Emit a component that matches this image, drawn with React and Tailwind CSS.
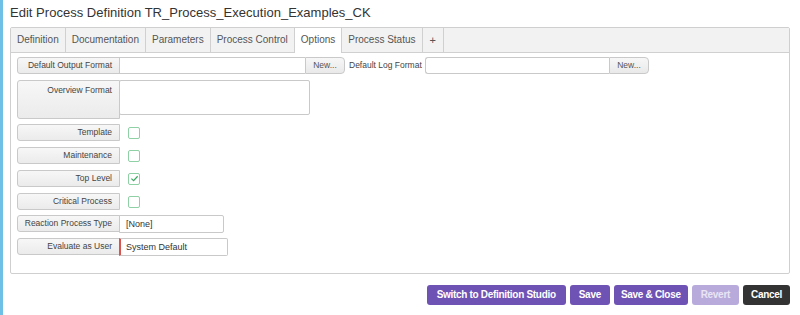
import React from 'react';

const tabs = ['Definition', 'Documentation', 'Parameters', 'Process Control', 'Options', 'Process Status', '+'];

function Label({ children, tall }) {
  return (
    <div
      className={`w-[103px] shrink-0 border border-[#c9c9c9] rounded-l-[3px] bg-gradient-to-b from-[#f7f7f7] to-[#ebebeb] text-right pr-[7px] text-[8.5px] text-[#444] whitespace-nowrap ${tall ? 'h-[39px] pt-[3px] leading-[12px]' : 'h-[17px] leading-[15px]'}`}
    >
      {children}
    </div>
  );
}

function CheckRow({ label, checked }) {
  return (
    <div className="flex items-center h-[17px]">
      <Label>{label}</Label>
      <div className="ml-[8px] w-[12px] h-[12px] border border-[#8fd0a4] rounded-[2px] bg-white flex items-center justify-center">
        {checked && (
          <svg width="9" height="9" viewBox="0 0 10 10">
            <path d="M1.5 5.2 L4 7.5 L8.5 2.5" fill="none" stroke="#3aa860" strokeWidth="1.3" />
          </svg>
        )}
      </div>
    </div>
  );
}

function NewButton() {
  return (
    <div className="w-[40px] h-[17px] border border-[#c9c9c9] rounded-r-[4px] bg-gradient-to-b from-[#f7f7f7] to-[#e9e9e9] text-[8.5px] text-[#555] leading-[15px] text-center">
      New...
    </div>
  );
}

export default function App() {
  return (
    <div className="w-[800px] h-[315px] bg-white flex font-['Liberation_Sans',Arial,sans-serif] overflow-hidden">
      <div className="w-[3px] h-full bg-[#6ec0e6] shrink-0" />
      <div className="flex-1 pl-[7px] pr-[10px]">
        <div className="h-[27px] pt-[5px] text-[13px] text-[#333] leading-[16px] tracking-[0.02px]">
          Edit Process Definition TR_Process_Execution_Examples_CK
        </div>
        <div className="h-[247px] border border-[#cfcfcf] rounded-[2px] flex flex-col">
          <div className="h-[25px] bg-[#f2f2f2] border-b border-[#d0d0d0] flex shrink-0">
            {tabs.map((t) => (
              <div
                key={t}
                className={`h-[25px] border-r border-[#d0d0d0] leading-[24px] text-[#555] ${t === 'Options' ? 'bg-white' : ''} ${t === '+' ? 'px-[7px] text-[11px]' : 'px-[6px] text-[10px]'}`}
              >
                {t}
              </div>
            ))}
          </div>
          <div className="pl-[6px] pt-[4px] flex flex-col">
            <div className="flex items-center h-[17px]">
              <Label>Default Output Format</Label>
              <div className="flex h-[17px] -ml-px">
                <div className="w-[186px] h-[17px] border border-[#c9c9c9] border-r-0 bg-white" />
                <NewButton />
              </div>
              <div className="ml-[4px] w-[76px] text-[8.5px] text-[#444] whitespace-nowrap">Default Log Format</div>
              <div className="flex h-[17px]">
                <div className="w-[184px] h-[17px] border border-[#c9c9c9] border-r-0 rounded-l-[3px] bg-white" />
                <NewButton />
              </div>
            </div>
            <div className="flex mt-[6px]">
              <Label tall>Overview Format</Label>
              <div className="-ml-px w-[191px] h-[35px] border border-[#c9c9c9] rounded-[2px] bg-white" />
            </div>
            <div className="flex flex-col gap-[6px] mt-[5px]">
              <CheckRow label="Template" />
              <CheckRow label="Maintenance" />
              <CheckRow label="Top Level" checked />
              <CheckRow label="Critical Process" />
            </div>
            <div className="flex mt-[5px] h-[18px]">
              <Label>Reaction Process Type</Label>
              <div className="-ml-px w-[105px] h-[18px] border border-[#c9c9c9] rounded-r-[2px] bg-white text-[9px] text-[#333] leading-[16px] pl-[6px]">
                [None]
              </div>
            </div>
            <div className="flex mt-[5px] h-[18px]">
              <Label>Evaluate as User</Label>
              <div className="-ml-px w-[109px] h-[18px] border border-[#c9c9c9] border-l-2 border-l-[#d9534f] rounded-r-[2px] bg-white text-[9px] text-[#333] leading-[16px] pl-[5px]">
                System Default
              </div>
            </div>
          </div>
        </div>
        <div className="flex justify-end gap-[4px] mt-[11px] text-[10px] font-bold tracking-[-0.3px] text-white">
          <div className="h-[20px] px-[10px] rounded-[3px] bg-[#6e52b4] leading-[20px]">Switch to Definition Studio</div>
          <div className="h-[20px] px-[9px] rounded-[3px] bg-[#6e52b4] leading-[20px]">Save</div>
          <div className="h-[20px] px-[7px] rounded-[3px] bg-[#6e52b4] leading-[20px]">Save &amp; Close</div>
          <div className="h-[20px] px-[9px] rounded-[3px] bg-[#b8abdc] leading-[20px] text-[#e8e4f4]">Revert</div>
          <div className="h-[20px] px-[8px] rounded-[3px] bg-[#333333] leading-[20px]">Cancel</div>
        </div>
      </div>
    </div>
  );
}
